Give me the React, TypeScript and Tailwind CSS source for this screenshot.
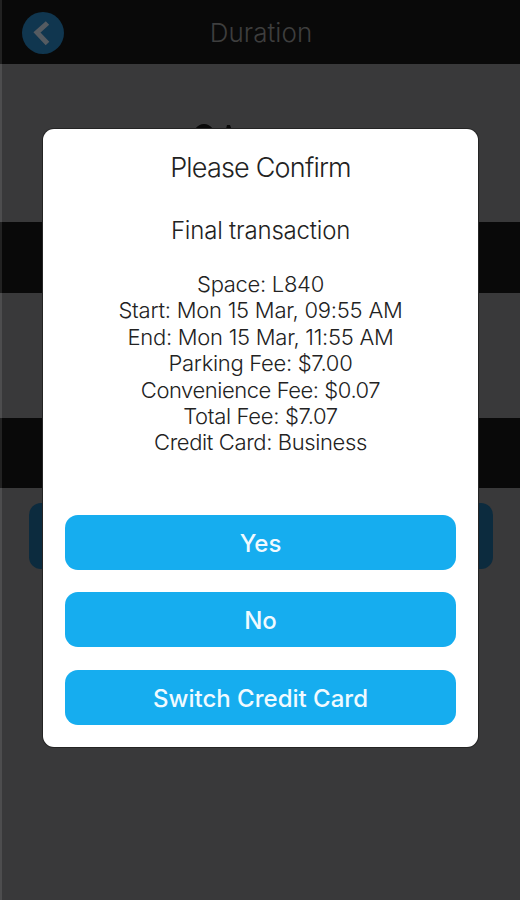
import React from "react";

const details = [
  { text: "Space: L840", tracking: "tracking-[-0.3px]" },
  { text: "Start: Mon 15 Mar, 09:55 AM", tracking: "tracking-[-0.24px]" },
  { text: "End: Mon 15 Mar, 11:55 AM", tracking: "tracking-[-0.27px]" },
  { text: "Parking Fee: $7.00", tracking: "tracking-[-0.31px]" },
  { text: "Convenience Fee: $0.07", tracking: "tracking-[-0.45px]" },
  { text: "Total Fee: $7.07", tracking: "tracking-[-0.33px]" },
  { text: "Credit Card: Business", tracking: "tracking-[-0.38px]" },
];

const actions = ["Yes", "No", "Switch Credit Card"];

function DurationScreen() {
  return (
    <div className="flex h-full flex-col bg-[#39393a]">
      <header className="grid h-16 shrink-0 grid-cols-[88px_1fr_88px] items-center bg-[#090909] pt-0.5">
        <button aria-label="Back" className="ml-[22px] flex size-[42px] items-center justify-center rounded-full bg-[#10364f]">
          <svg viewBox="0 0 42 42" className="size-[42px]" fill="none">
            <path d="M25.5 11 15 20.5 25.5 31.5" stroke="#555b61" strokeWidth="5" />
          </svg>
        </button>
        <h1 className="ml-0.5 text-center text-[26px] leading-8 font-light tracking-[0.05px] text-[#3e3e3e]">Duration</h1>
      </header>
      <div className="h-[158px] shrink-0 pt-[59px] pl-[193px]">
        <svg viewBox="0 0 42 6" className="h-1.5 w-[42px]" fill="#090909">
          <path d="M2 6Q6 1 11 1T20 6ZM33 6l1-4h3l1.5 4Z" />
        </svg>
      </div>
      <div className="h-[71px] shrink-0 bg-[#090909]" />
      <div className="h-[125px] shrink-0" />
      <div className="h-[70px] shrink-0 bg-[#090909]" />
      <div className="mr-[27px] ml-[29px] mt-[15px] h-[66px] shrink-0 rounded-[12px] bg-[#0c2b3e]" />
    </div>
  );
}

function ConfirmDialog() {
  return (
    <section role="dialog" className="absolute top-[129px] left-[43px] flex h-[617.5px] w-[435px] flex-col items-center rounded-[11px] bg-white px-[22px] pt-[20px] whitespace-nowrap text-[#222] shadow-[0_0_0_1px_#242424]">
      <h2 className="pt-px text-[27px] leading-9 font-light tracking-[-0.8px]">Please Confirm</h2>
      <p className="mt-[29px] text-[24px] leading-8 font-light tracking-[-0.2px]">Final transaction</p>
      <div className="mt-[24px] flex flex-col items-center text-[22px] leading-[26.4px] font-light">
        {details.map((d) => (
          <p key={d.text} className={d.tracking}>{d.text}</p>
        ))}
      </div>
      <div className="mt-[59px] flex w-full flex-col gap-[22.6px]">
        {actions.map((label) => (
          <button key={label} className="h-[55px] w-full rounded-[13px] bg-[#16adef] pt-[3px] text-[24px] leading-8 font-medium text-[#f0faff]">{label}</button>
        ))}
      </div>
    </section>
  );
}

export default function App() {
  return (
    <main className="relative h-[900px] w-[520px] overflow-hidden font-['Inter','Liberation_Sans',sans-serif]">
      <DurationScreen />
      <div className="absolute inset-y-0 left-0 w-[2px] bg-white/10" />
      <ConfirmDialog />
    </main>
  );
}
